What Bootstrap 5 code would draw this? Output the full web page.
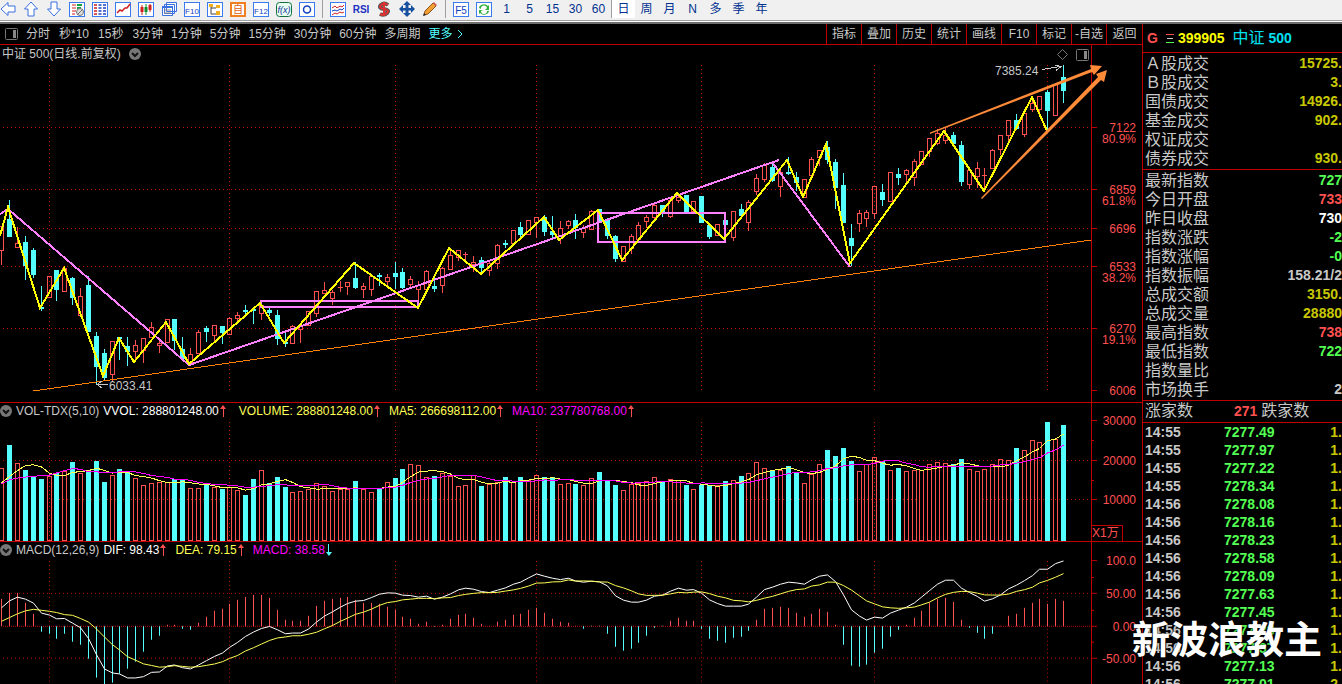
<!DOCTYPE html>
<html lang="zh-CN">
<head>
<meta charset="utf-8">
<meta name="viewport" content="width=device-width, initial-scale=1">
<title>中证 500 日线</title>
<link href="https://cdn.jsdelivr.net/npm/bootstrap@5.3.0/dist/css/bootstrap.min.css" rel="stylesheet">
<style>
:root{--line:#c00000;--up:#ff5050;--down:#54ffff;--txt:#c8c8c8}
body{background:#000;color:var(--txt);font:12px/16px "Liberation Sans","Noto Sans CJK SC",sans-serif}
button,.btn{font:inherit;color:inherit;line-height:16px;border-radius:0}
.toolbar{height:24px;background:#f0f0f0;color:#003090;border-bottom:2px solid #6e6e6e;box-shadow:inset 0 -1px #fff,inset 0 -2px #a0a0a0}
.tool{width:23px;height:18px;flex:none}
.tool:first-child{width:19px;text-align:left}
.tool svg{width:16px;height:16px;display:block;margin:0 auto}
.tool:first-child svg{margin:0}
.tool.picked{background:#fff}
.split{width:8px;flex:none;height:18px;border-left:1px solid #a0a0a0;margin-left:4px;margin-right:-4px}
.split.tight{width:1px;margin:0 0 0 1px}
.periods{height:21px;border-bottom:1px solid var(--line)}
.period-list .btn:nth-child(-n+3){margin-right:1px}
.dock{width:22px;border-right:1px solid var(--line)}
.menu .btn{width:35px;border-left:1px solid var(--line)!important;white-space:nowrap}
.menu .btn:last-child{width:36px}
.cyan{color:var(--down)}
.pane{min-height:0;border-bottom:1px solid var(--line)}
.pane-price{flex:358 1 0}.pane-vol{flex:139 1 0}.pane-macd{flex:142 1 0;border:0}
.pane>svg{display:block;width:100%;height:100%;shape-rendering:crispEdges}
.heading{top:0;left:0;white-space:nowrap}
.heading.main{top:1px;padding-left:2px}
.heading svg{width:12px;height:12px}
.heading .arrow{width:8px;margin-right:8px}
.tick-label{right:6px;color:var(--up);transform:translateY(-50%)}
.note{line-height:14px;transform:translateY(-50%)}
.unit{right:19px;bottom:0;width:32px;height:16px;color:var(--up);border:1px solid var(--line);border-bottom:0;line-height:15px}
.corner{top:4px;right:53px}
.quote{width:200px;flex:none;border-left:1px solid var(--line)}
.quote-title{height:29px;border-bottom:1px solid var(--line);font-size:14px}
.quote td,.quote th{padding:0;white-space:nowrap}
.facts{font-size:16px;line-height:19px;border-collapse:separate;border-spacing:0;padding:1px 0;border-bottom:1px solid var(--line)}
.facts th{font-weight:400;padding-left:2px!important;width:66px}
.facts td{font-size:14px;font-weight:700;text-align:right}
.facts tr{height:19px}
.breadth{height:22px;border-bottom:1px solid var(--line);font-size:16px}
.breadth b{font-size:14px}
.deals{font-size:14px;line-height:18px;font-weight:700}
.deals td:first-child{width:81px;padding-left:2px}
.gold{color:#c8c800}.lime{color:#54ff54}.rose{color:var(--up)}
.purple{color:#f0f}.lemon{color:#ffff54}
.sign{right:20px;bottom:22px;font:700 38px/50px "Noto Sans CJK SC",sans-serif;color:#fff;text-shadow:0 0 2px #000}
</style>
</head>
<body class="vh-100 overflow-hidden d-flex flex-column">
<nav class="toolbar d-flex align-items-start overflow-hidden" id="tools" aria-label="工具栏"></nav>
<main class="d-flex flex-fill overflow-hidden" style="min-height:0">
  <section class="d-flex flex-column flex-fill" style="min-width:0">
    <div class="periods d-flex align-items-stretch flex-shrink-0">
      <button class="btn p-0 border-0 dock d-flex align-items-center justify-content-center" aria-label="侧栏"><svg width="13" height="12"><rect x=".5" y=".5" width="12" height="11" rx="1" fill="none" stroke="#777"/><path d="M8 2h3v8H8z" fill="#888"/></svg></button>
      <div class="d-flex gap-2 ps-1 period-list" id="periods"></div>
      <div class="d-flex ms-auto menu" id="menu"></div>
    </div>
    <div class="pane pane-price position-relative">
      <svg viewBox="0 45 1142 357" preserveAspectRatio="none" id="price"></svg>
      <div class="heading main position-absolute d-flex align-items-center gap-2"><span>中证 500(日线.前复权)</span><svg viewBox="0 0 12 12"><circle cx="6" cy="6" r="6" fill="#777"/><path d="M3 5l3 3 3-3" fill="none" stroke="#111" stroke-width="2"/></svg></div>
      <div class="corner position-absolute d-flex gap-2 align-items-center"><svg width="11" height="11"><path d="M5.500 .5l5 5-5 5-5-5z" fill="none" stroke="#777"/></svg><svg width="13" height="12"><rect x=".5" y=".5" width="12" height="11" rx="1" fill="none" stroke="#777"/><path d="M8 2h3v8H8z" fill="#888"/></svg></div>
    </div>
    <div class="pane pane-vol position-relative">
      <svg viewBox="0 403 1142 138" preserveAspectRatio="none" id="vol"></svg>
      <div class="heading position-absolute d-flex align-items-center" id="volHead"></div>
      <div class="unit position-absolute">X1万</div>
    </div>
    <div class="pane pane-macd position-relative">
      <svg viewBox="0 542 1142 142" preserveAspectRatio="none" id="macd"></svg>
      <div class="heading position-absolute d-flex align-items-center" id="macdHead"></div>
    </div>
  </section>
  <aside class="quote overflow-hidden position-relative">
    <div class="quote-title d-flex align-items-center fw-bold ps-1">
      <span class="rose">G</span>
      <svg class="ms-2 me-1" width="8" height="10"><path d="M0 1.500h8" stroke="#ff5050"/><path d="M1 5.500h6" stroke="#ccc"/><path d="M0 9.500h8" stroke="#54ff54"/></svg>
      <span style="color:#ffff00">399905</span><span class="ms-1 ps-1" style="color:#00e0f0"><span class="fw-normal fs-6">中证</span> 500</span>
    </div>
    <table class="facts w-100" id="turnover"></table>
    <table class="facts w-100" id="index"></table>
    <div class="breadth d-flex align-items-center"><span style="width:91px;padding-left:2px">涨家数</span><b class="rose me-1">271</b><span>跌家数</span></div>
    <table class="deals w-100" id="deals"></table>
  </aside>
</main>
<div class="sign position-absolute">新波浪教主</div>
<script>
const $ = id => document.getElementById(id);
/* ---------- toolbar ---------- */
const box = s => `<rect x=".5" y="1.500" width="15" height="14" fill="#fff" stroke="#3a7bf0"/>${s}`;
const word = (t, c='#1040c0') => box(`<text x="8" y="12.500" text-anchor="middle" font-size="${t.length>2?8:10}" fill="${c}">${t}</text>`);
const arrow = r => `<path transform="rotate(${r} 8 8)" d="M1 8l7-6.500V5h7v6H8v3.500z" fill="#fff" stroke="#3a6fe0"/>`;
const icons = [
 ['后退',arrow(0)],['上',arrow(90)],['下',arrow(270)],
 ['报表',box('<path d="M3 4h4M3 7h4M3 10h4M3 13h3" stroke="#d02020"/><path d="M8 4h5M8 7h4" stroke="#10a040" stroke-width="2"/><circle cx="11" cy="11" r="3.500" fill="#ddd" stroke="#777"/><path d="M8 14l6-6" stroke="#777"/>')],
 ['列表',box('<path d="M2 4h3M2 7h3M2 10h3M2 13h3" stroke="#d02020" stroke-width="1.500"/><path d="M6.500 4h3M6.500 7h3M6.500 10h3M6.500 13h3M11 4h3M11 7h3M11 10h3M11 13h3" stroke="#2040c0" stroke-width="1.500"/>')],
 ['走势',box('<path d="M2 12l3-3 2 1 3-3 2 0 3-4" fill="none" stroke="#d02020" stroke-width="1.500"/>')],
 ['K线',box('<path d="M4 4v10M12 3v8" stroke="#d02020"/><path d="M2.500 6h3v5h-3zM10.500 4h3v5h-3z" fill="#d02020"/><path d="M8 3v11" stroke="#109030"/><path d="M6.500 6h3v5h-3z" fill="#109030"/>')],
 ['窗口','<path d="M5.500 1.500h10v9h-10zM3.500 3.500h10v9h-10zM1.500 5.500h10v9h-10z" fill="#fff" stroke="#3a6fe0"/><path d="M1 6h11" stroke="#3a6fe0" stroke-width="2"/><path d="M3 9h7M3 12h7" stroke="#888"/>'],
 ['F10',word('F10')],
 ['树',box('<path d="M4 4v9h5M4 7h5" fill="none" stroke="#444"/><path d="M2 3h4v3H2zM9 4h4v3H9zM9 10h4v4H9z" fill="#f0b020"/>')],
 ['自选','<rect x="1" y="2" width="14" height="13" fill="#fff" stroke="#f08020" stroke-width="2"/><text x="8" y="12" text-anchor="middle" font-size="10" fill="#e06010">自</text>'],
 ['F12',word('F12')],
 ['公式','<rect x=".5" y="1.500" width="15" height="14" rx="3" fill="#e8fff0" stroke="#107040"/><text x="8" y="12" text-anchor="middle" font-size="9" font-style="italic" fill="#1030a0">f(x)</text>'],
 ['圆',box('<circle cx="8" cy="8.500" r="3.500" fill="none" stroke="#1040c0" stroke-width="1.500"/>')],
 0,
 ['叠图',box('<path d="M2 7l3-2 2 2 3-2 2 1 2-2" fill="none" stroke="#d02020"/><path d="M2 10l3-1 2 1 3-2 2 1 2-2" fill="none" stroke="#1040c0"/><path d="M2 14l3-2 2 1 3-2 2 1 2-1" fill="none" stroke="#d02020"/>')],
 ['RSI','<text x="8" y="12" text-anchor="middle" font-size="10" font-weight="700" fill="#2030c0">RSI</text>'],
 ['S','<path d="M12 4Q8 1 5 4t3 4 3 4-7 1" fill="none" stroke="#555" stroke-width="4"/><path d="M12 4Q8 1 5 4t3 4 3 4-7 1M8 1v14" fill="none" stroke="#e03030" stroke-width="2"/>'],
 ['移动','<path d="M8 0l4 4H9.500v3H12V4l4 4-4 4V9.500H9.500V12H12l-4 4-4-4h2.500V9.500H4V12L0 8l4-4v3h2.500V4H4z" fill="#1850a0"/>'],
 ['画笔','<path d="M2 14l1-4L11 2l3 3-8 8z" fill="#f0a030" stroke="#905020"/><path d="M11 2l1-1 3 3-1 1z" fill="#e06060"/><path d="M1 15l1-3 2 2z" fill="#222"/>'],
 0,
 ['F5',word('F5')],
 ['刷新',box('<path d="M3 7a5 4 0 0 1 9-2l1-1v5H9l2-2a3 3 0 0 0-6 1zM13 10a5 4 0 0 1-9 2l-1 1V9h4l-2 1a3 3 0 0 0 6 0z" fill="#30b040"/>')]
];
$('tools').innerHTML = icons.map(i => i ? `<button class="btn p-0 border-0 tool" aria-label="${i[0]}"><svg viewBox="0 0 16 16">${i[1]}</svg></button>` : '<span class="split"></span>').join('')
 + ['1','5','15','30','60'].map(t => `<button class="btn p-0 border-0 tool">${t}</button>`).join('') + '<span class="split tight"></span>'
 + [...'日周月N多季年'].map((t,i) => `<button class="btn p-0 border-0 tool${i?'':' picked'}">${t}</button>`).join('');
$('periods').innerHTML = ['分时','秒*10','15秒','3分钟','1分钟','5分钟','15分钟','30分钟','60分钟','多周期'].map(t => `<button class="btn p-0 border-0">${t}</button>`).join('')
 + '<button class="btn p-0 border-0 cyan d-flex align-items-center gap-1">更多 <svg width="6" height="10"><path d="M1 1l4 4-4 4" fill="none" stroke="#54ffff"/></svg></button>';
$('menu').innerHTML = ['指标','叠加','历史','统计','画线','F10','标记','-自选','返回'].map(t => `<button class="btn p-0 border-0">${t}</button>`).join('');

/* ---------- indicator headings ---------- */
const fold = '<svg class="me-1" viewBox="0 0 12 12"><circle cx="6" cy="6" r="6" fill="#777"/><path d="M3 5l3 3 3-3" fill="none" stroke="#111" stroke-width="2"/></svg>';
const flag = up => `<svg class="arrow" viewBox="0 0 8 12"><path ${up?'':'transform="rotate(180 4 6)"'} d="M4 0l3 4H5v8H4V4H1z" fill="${up?'#ff5050':'#54ffff'}"/></svg>`;
const head = (name, items) => fold + `<span class="me-1">${name}</span>` + items.map(([t,c,u]) => `<span class="${c}">${t}</span>${flag(u)}`).join('');
$('volHead').innerHTML = head('VOL-TDX(5,10)', [['VVOL: 288801248.00','text-white',1],['<span class="ps-1">VOLUME: 288801248.00</span>','lemon',1],['MA5: 266698112.00','lemon',1],['MA10: 237780768.00','purple',1]]);
$('macdHead').innerHTML = head('MACD(12,26,9)', [['DIF: 98.43','text-white',1],['DEA: 79.15','lemon',1],['MACD: 38.58','purple',0]]);

/* ---------- series ---------- */
const cx = i => Math.floor(1.95 + 7.8635*i);
// colour, high, body top, body bottom, low
const candles = `r226,226,250,264 c200,219,236,236 r227,243,247,247 c236,242,265,279 c248,250,274,277 c286,307,308,310 r276,276,297,297 c270,270,289,300 r267,268,291,291 c277,278,297,304
r288,296,315,315 c276,285,331,331 c332,336,366,384 c349,353,377,379 r341,341,374,381 c337,337,338,359 c337,346,351,365 r340,345,351,361 r338,338,350,362 r322,327,337,337
r340,343,345,352 r319,319,342,342 c319,319,340,349 c337,349,358,360 r348,354,362,363 r330,332,353,353 c326,328,331,341 r325,325,335,340 c326,326,332,343 r317,318,334,334
r312,315,318,320 c305,310,311,315 c309,309,310,323 r303,305,313,319 c308,310,312,315 c310,315,338,344 c331,342,343,346 r325,326,343,343 r326,326,329,342 r311,311,325,325
r291,291,313,316 r282,290,293,293 r290,292,298,304 r281,287,287,291 r282,282,286,294 c262,278,287,288 r283,286,289,297 r275,276,289,295 c273,275,276,285 r274,277,281,287
c262,273,276,288 c268,272,287,288 r276,279,284,286 r281,285,289,305 r270,271,289,289 c277,286,288,291 r267,268,285,292 r251,255,269,269 r250,250,257,260 r252,254,254,260
r256,262,264,271 c257,260,267,271 r261,263,270,275 r244,245,263,268 c240,243,244,247 r230,230,243,243 c222,227,234,238 r220,220,234,234 r217,217,222,237 c215,217,231,235
c216,231,234,238 r221,228,238,243 r220,221,225,228 c214,220,227,238 r225,228,232,237 r210,211,229,229 c209,209,220,222 c218,219,235,238 c235,236,258,261 r246,246,261,261
r234,236,248,253 r222,225,239,239 r215,217,221,227 r203,205,217,220 c205,205,213,216 r198,200,216,217 r193,197,200,202 c195,195,211,212 r201,201,211,211 c196,196,222,222
c223,225,236,238 r224,224,235,235 c215,220,224,242 r211,211,237,240 c204,209,215,217 r200,202,222,230 r174,178,191,194 r163,165,179,181 c164,167,180,181 r170,172,186,196
c157,172,173,174 c172,177,182,190 r179,179,197,197 r157,159,175,177 r150,150,157,165 c141,147,159,163 c159,162,187,208 c173,185,222,222 c224,238,245,265 r210,213,223,231
r210,212,218,226 r186,186,213,218 c184,192,199,205 r172,172,201,201 c168,174,177,184 r169,170,174,182 r159,161,177,185 r151,151,164,164 r138,138,151,156 r129,133,143,144
r127,135,140,143 c132,135,143,146 c141,145,181,185 r170,170,184,188 r162,168,176,187 r168,175,175,190 r149,150,168,168 r135,135,149,154 r120,120,135,141 c114,120,128,128
r113,113,134,136 r97,103,109,111 r96,96,109,113 c90,92,110,130 r84,84,115,115 c65,77,90,102`.trim().split(/\s+/).map(s => [s[0], ...s.slice(1).split(',').map(Number)]);
// the volume and MACD rows count in thirds of a pixel below y = 400
const volume = [205,135,190,210,228,237,229,219,213,186,220,216,183,246,226,207,217,235,256,250,247,247,237,240,265,265,253,260,267,262,271,285,237,211,250,231,261,277,274,268,250,259,274,268,268,243,268,277,265,247,234,207,193,196,232,228,220,229,259,256,226,258,253,247,231,245,231,241,226,231,231,253,250,252,256,235,216,240,255,271,253,250,244,232,243,238,241,255,268,255,255,256,243,241,228,220,187,205,210,211,198,217,250,223,193,150,168,144,183,214,193,172,183,211,204,214,211,211,193,187,190,192,177,208,214,208,193,178,181,144,151,121,127,66,118,75];
const hist = [598,579,579,609,642,696,702,717,702,726,735,777,834,871,849,823,807,786,756,720,708,675,675,687,690,669,651,633,627,612,600,591,585,585,595,630,660,663,663,648,618,603,597,594,591,600,609,609,612,621,629,651,657,672,666,682,675,657,645,642,654,672,678,666,660,645,642,630,624,639,657,666,669,678,687,679,679,702,741,753,747,729,708,684,679,663,654,663,663,687,717,723,729,714,711,693,660,627,624,621,624,639,651,642,627,636,675,735,798,801,795,759,747,711,690,675,654,633,609,597,594,606,660,684,699,717,702,678,648,642,624,609,597,612,597,603];
const dif = [624,603,592,598,610,640,646,657,656,670,684,716,765,808,820,823,835,835,831,818,817,799,796,804,808,796,783,770,760,743,728,710,697,686,680,690,702,700,700,688,667,649,636,622,611,604,602,593,583,579,580,586,587,592,589,598,592,582,570,565,568,575,578,571,564,553,547,534,522,529,535,539,535,543,547,544,546,558,588,601,607,607,601,589,586,574,565,571,569,580,600,611,619,619,619,613,592,569,562,553,547,549,553,540,529,525,545,585,630,649,661,652,655,640,631,622,609,592,572,553,541,541,565,578,590,604,597,585,567,556,542,527,508,508,491,483];
const third = v => Math.round(400 + v/3);
const mean = (n, lead) => volume.map((_, i) => i < n-1 ? lead[i] : volume.slice(i-n+1, i+1).reduce((a,b)=>a+b)/n);
const curve = (a, c) => `<polyline points="${a.map((v,i) => (cx(i)+.5)+','+(400+v/3).toFixed(1)).join(' ')}" fill="none" stroke="${c}"/>`;
const path = (p, c, w=2) => `<polyline points="${p}" fill="none" stroke="${c}" stroke-width="${w}"/>`;
const UP = '#ff5050', DN = '#54ffff';

/* ---------- grid and axis ---------- */
const frame = (top, end, from, to, rows, majors, minors) =>
  [49,229,395,536,701,874,1047].map(x => `<path d="M${x}.5 ${from}V${to}" stroke="#c00000" stroke-dasharray="1 3"/>`).join('')
  + rows.map(y => `<path d="M3 ${y}.5H1091" stroke="#c00000" stroke-dasharray="1 3"/>`).join('')
  + `<path d="M1091 ${top}h1V${end}h-1z" fill="#c00000"/>`
  + majors.map(y => `<path d="M1091 ${y}.5h6" stroke="#c00000"/>`).join('') + minors.map(y => `<path d="M1091 ${y}.5h3" stroke="#c00000"/>`).join('');

$('price').innerHTML = frame(45, 402, 65, 390, [127,189,228,266,328], [127,189,228,266,328,390], [])
 + candles.map(([k,h,t,b,l], i) => { const x = cx(i);
   if (k === 'c') return `<path d="M${x} ${h}h1V${l+1}h-1zM${x-2} ${t}h5V${b+1}h-5z" fill="${DN}"/>`;
   if (b === t) return `<path d="M${x} ${h}h1V${l+1}h-1zM${x-2} ${t}h5v1h-5z" fill="${UP}"/>`;
   return `<path d="M${x}.5 ${h}V${t}M${x}.5 ${b+1}V${l+1}M${x-1.5} ${t+.5}h4V${b+.5}h-4z" fill="none" stroke="${UP}"/>`; }).join('')
 + path('33,391 1091,240','#ff8000',1)
 + path('0,214 8,209 189,365 779,160','#ff80ff') + path('772,162 850,267','#ff80ff')
 + '<path d="M261 301h157v6H261zM598 213h127v29H598z" fill="none" stroke="#ff80ff" stroke-width="2"/>'
 + path('0,236 8,207 40,308 64,268 103,376 119,338 134,362 166,322 189,364 260,303 284,343 354,263 418,308 449,248 481,274 544,217 559,240 598,210 622,260 677,193 724,239 787,160 803,197 826,144 850,263 944,131 984,191 1032,97 1047,131','#ffff00')
 + '<g fill="#ff8a38" shape-rendering="auto"><path d="M930 132.500L1091 69 1090 65 1102 66 1094 75 1092 72 930 134z"/><path d="M981 198L1098 77 1096 74 1107 70 1104 82 1101 80 982 199z"/></g>'
 + '<g fill="none" stroke="#c8c8c8"><path d="M1042 69.500l18-3M1055 65l6 1.500-5 4"/><path d="M97 384.500h11M102 381l-5 3.500 5 3.500"/></g>';

$('vol').innerHTML = frame(403, 541, 422, 540, [460,499], [420,460,499], [440,480])
 + volume.map((v,i) => { const x = cx(i), y = third(v); return candles[i][0]==='c' ? `<path d="M${x-2} ${y}h5V540h-5z" fill="${DN}"/>` : `<path d="M${x-1.5} ${y+.5}h4V539.500h-4z" fill="none" stroke="${UP}"/>`; }).join('')
 + curve(mean(5,[247,229,211,196]), '#ffff54') + curve(mean(10,[250,238,233,230,228,226,224,218,211]), '#ff00ff');

$('macd').innerHTML = frame(542, 684, 561, 684, [593,658], [560,593,626,658], [577,610,642])
 + '<path d="M3 626.500H1091" stroke="#c00000" stroke-dasharray="1 1"/>'
 + hist.map((v,i) => `<path d="M${cx(i)}.5 626.500V${third(v)}" stroke="${v<679?UP:DN}"/>`).join('')
 + curve(dif, '#fff') + curve(dif.map((d,i) => d-(hist[i]-679)/2), '#ffff54');

/* ---------- labels laid over the plots ---------- */
const label = (svg, top, height, list) => svg.insertAdjacentHTML('afterend', list.map(([y,t]) => `<span class="tick-label position-absolute" style="top:${(y-top)/height*100}%">${t}</span>`).join(''));
label($('price'),45,357,[[128,'7122'],[139,'80.9%'],[190,'6859'],[201,'61.8%'],[229,'6696'],[267,'6533'],[278,'38.2%'],[329,'6270'],[340,'19.1%'],[391,'6006']]);
label($('vol'),403,138,[[421,'30000'],[461,'20000'],[500,'10000']]);
label($('macd'),542,142,[[561,'100.0'],[594,'50.00'],[627,'0.00'],[659,'-50.00']]);
$('price').insertAdjacentHTML('afterend', [[995,71,'7385.24'],[109,386,'6033.41']].map(([x,y,t]) => `<span class="note position-absolute" style="left:${x/1142*100}%;top:${(y-45)/357*100}%">${t}</span>`).join(''));

/* ---------- quote panel ---------- */
const facts = a => '<tbody>' + a.map(([n,v,c]) => `<tr><th scope="row">${n}</th><td class="${c}">${v}</td></tr>`).join('') + '</tbody>';
$('turnover').innerHTML = facts([['Ａ股成交','15725.','gold'],['Ｂ股成交','3.','gold'],['国债成交','14926.','gold'],['基金成交','902.','gold'],['权证成交','',''],['债券成交','930.','gold']]);
$('index').innerHTML = facts([['最新指数','727','lime'],['今日开盘','733','rose'],['昨日收盘','730','text-white'],['指数涨跌','-2','lime'],['指数涨幅','-0','lime'],['指数振幅','158.21/2',''],['总成交额','3150.','gold'],['总成交量','28880','gold'],['最高指数','738','rose'],['最低指数','722','lime'],['指数量比','',''],['市场换手','2','']]);
$('deals').innerHTML = '<tbody>' + ['7277.49','7277.97','7277.22','7278.34','7278.08','7278.16','7278.23','7278.58','7278.09','7277.63','7277.45','7277.28','7277.37','7277.13','7277.01'].map((p,i) => `<tr><td>14:5${i<4?5:6}</td><td class="lime">${p}</td><td class="gold text-end">${i<14?1:2}.</td></tr>`).join('') + '</tbody>';
</script>
<script src="https://cdn.jsdelivr.net/npm/bootstrap@5.3.0/dist/js/bootstrap.bundle.min.js"></script>
</body>
</html>
